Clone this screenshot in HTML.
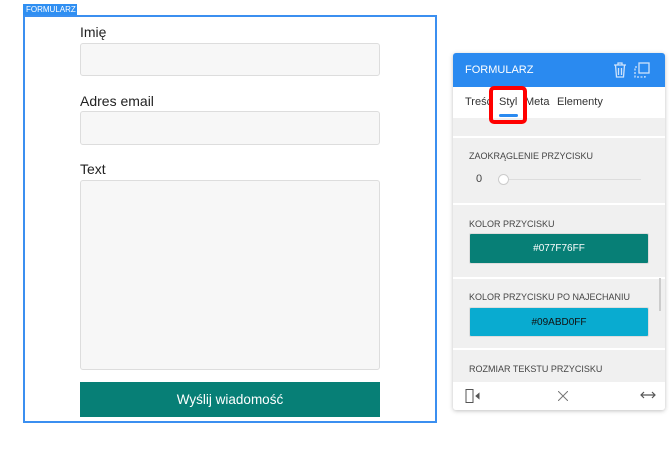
<!DOCTYPE html>
<html><head><meta charset="utf-8"><style>
*{box-sizing:border-box;margin:0;padding:0}
body{width:669px;height:459px;background:#fff;font-family:"Liberation Sans",sans-serif;position:relative;overflow:hidden}
.abs{position:absolute}
.tag{left:23px;top:4px;width:54px;height:12px;background:#2f8ff2;color:#fff;font-size:8px;line-height:12px;padding-left:3px}
.form{left:23px;top:15px;width:414px;height:408px;border:2px solid #3b8ff0}
.lbl{left:80px;font-size:14px;color:#222}
.inp{left:80px;width:300px;border:1px solid #ddd;border-radius:3px;background:#f7f7f7}
.btn{left:80px;top:382px;width:300px;height:35px;background:#077f76;color:#fff;font-size:13.5px;text-align:center;line-height:35px}
.panel{left:453px;top:53px;width:212px;height:357px;background:#f0f0f0;box-shadow:0 1px 4px rgba(0,0,0,.25);border-radius:3px;overflow:hidden}
.hdr{left:0;top:0;width:212px;height:34px;background:#2a8af0;color:#fff;font-size:11px;line-height:34px;padding-left:12px}
.tabs{left:0;top:34px;width:212px;height:31px;background:#fff;font-size:11px;color:#333}
.sep{left:0;width:212px;height:2px;background:#fff}
.cap{left:16px;font-size:9px;color:#444}
.sw{left:16px;width:180px;height:31px;border:1px solid #ddd;border-radius:2px;font-size:10px;text-align:center;line-height:30px}
.foot{left:0;top:329px;width:212px;height:28px;background:#fff}
</style></head><body>
<div class="abs tag">FORMULARZ</div>
<div class="abs form"></div>
<div class="abs lbl" style="top:24px">Imię</div>
<div class="abs inp" style="top:43px;height:33px"></div>
<div class="abs lbl" style="top:93px">Adres email</div>
<div class="abs inp" style="top:111px;height:34px"></div>
<div class="abs lbl" style="top:161px">Text</div>
<div class="abs inp" style="top:180px;height:190px"></div>
<div class="abs btn">Wyślij wiadomość</div>

<div class="abs panel">
 <div class="abs hdr">FORMULARZ
  <svg class="abs" style="left:160px;top:9px" width="14" height="16" viewBox="0 0 14 16" fill="none" stroke="#cfe3fb" stroke-width="1.3"><path d="M1 3h12M5 3V1h4v2M2.5 3l1 12h7l1-12M5.5 6v7M8.5 6v7"/></svg>
  <svg class="abs" style="left:181px;top:9px" width="16" height="16" viewBox="0 0 16 16" fill="none" stroke="#cfe3fb" stroke-width="1.3"><rect x="5" y="1" width="10" height="10"/><path d="M3 5H1v10h10v-2" stroke-dasharray="2 1.5"/></svg>
 </div>
 <div class="abs tabs">
  <span class="abs" style="left:12px;top:9px;width:24px;overflow:hidden;white-space:nowrap">Treść</span>
  <span class="abs" style="left:46px;top:9px">Styl</span>
  <span class="abs" style="left:72px;top:9px">Meta</span>
  <span class="abs" style="left:104px;top:9px">Elementy</span>
  <div class="abs" style="left:46px;top:27px;width:19px;height:3px;background:#2a8af0;border-radius:2px"></div>
 </div>
 <div class="abs" style="left:36px;top:33px;width:38px;height:38px;border:4px solid #f00;border-radius:5px"></div>
 <div class="abs sep" style="top:83px"></div>
 <div class="abs cap" style="top:98px">ZAOKRĄGLENIE PRZYCISKU</div>
 <div class="abs" style="left:23px;top:120px;font-size:11px;color:#444">0</div>
 <div class="abs" style="left:50px;top:126px;width:138px;height:1px;background:#ddd"></div>
 <div class="abs" style="left:45px;top:121px;width:11px;height:11px;border-radius:50%;background:#fff;border:1px solid #ccc"></div>
 <div class="abs sep" style="top:150px"></div>
 <div class="abs cap" style="top:166px">KOLOR PRZYCISKU</div>
 <div class="abs sw" style="top:180px;background:#077f76;color:#fff">#077F76FF</div>
 <div class="abs sep" style="top:224px"></div>
 <div class="abs cap" style="top:239px">KOLOR PRZYCISKU PO NAJECHANIU</div>
 <div class="abs sw" style="top:254px;height:30px;background:#09abd0;color:#111">#09ABD0FF</div>
 <div class="abs sep" style="top:295px"></div>
 <div class="abs cap" style="top:311px">ROZMIAR TEKSTU PRZYCISKU</div>
 <div class="abs" style="left:206px;top:225px;width:2px;height:33px;background:#ccc"></div>
 <div class="abs foot">
  <svg class="abs" style="left:12px;top:7px" width="16" height="14" viewBox="0 0 16 14" fill="none" stroke="#555" stroke-width="1"><rect x="1" y="0.5" width="7" height="13"/><path d="M11 7l3-2.5v5z" fill="#555"/></svg>
  <svg class="abs" style="left:105px;top:9px" width="10" height="10" viewBox="0 0 10 10" stroke="#777" stroke-width="1"><path d="M0 0l10 10M10 0L0 10"/></svg>
  <svg class="abs" style="left:187px;top:8px" width="16" height="10" viewBox="0 0 16 10" fill="none" stroke="#555" stroke-width="1.2"><path d="M1 5h14M4 2L1 5l3 3M12 2l3 3-3 3"/></svg>
 </div>
</div>
</body></html>
